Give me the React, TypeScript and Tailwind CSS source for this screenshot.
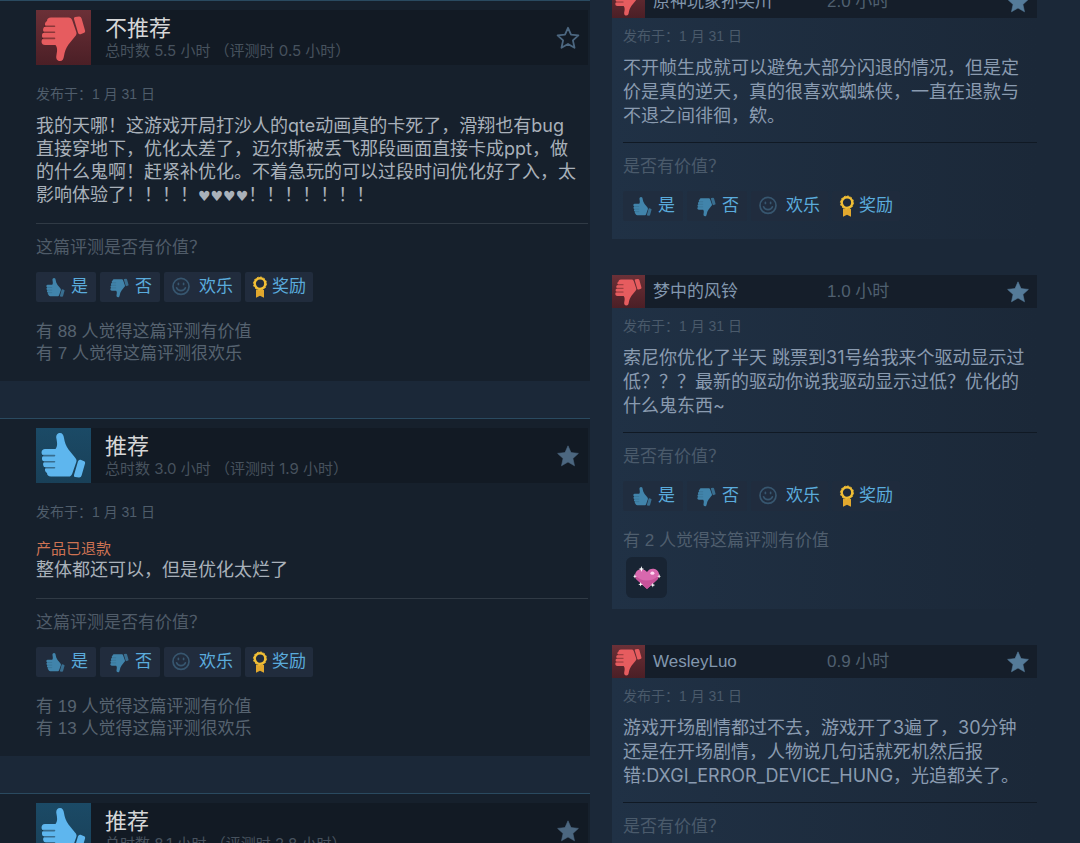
import type { ReactNode } from "react";

const hand =
  "M24 5C21 5 19.8 7.5 20.4 10.5C21 14 22 18 19.5 21H9C4.8 21 4.6 26.5 7.5 27.5C5.2 29 5.6 32.8 8 33.8C6.4 35.6 7 38.8 9.5 39.8C8.4 41.6 9 44 11 45C11 47 12.4 48.5 15 48.5H32.5C34.5 48.5 35.6 47.4 36.3 45.4L40.3 34C40.9 32.2 40.4 31 39 29.4L32.5 21.5C30 18 28.6 14 28 10C27.6 7 26.5 5 24 5Z";
const cuff =
  "M44.6 31.8L48.2 33.2Q49.4 33.8 49.1 35.2L45.6 47.6Q45 49.6 43 49.5L39.2 49.1Q37.4 48.8 38 47L42 33.2Q42.8 31.3 44.6 31.8Z";

const Thumb = ({
  down = false,
  small = false,
  className,
}: {
  down?: boolean;
  small?: boolean;
  className: string;
}) => (
  <svg viewBox="0 0 55 55" className={className} aria-hidden="true">
    <g transform={down ? "matrix(1 0 0 -1 0 56)" : undefined}>
      <path d={hand} fill="currentColor" />
      <path d={cuff} fill="currentColor" opacity={small ? 0.75 : 1} />
      <path
        d="M7 27.6H18.5M7.5 33.8H18.5M9 39.8H18.5"
        className={small ? "stroke-black/15" : "stroke-black/40"}
        strokeWidth="1.6"
        strokeLinecap="round"
        fill="none"
      />
    </g>
  </svg>
);

const Star = ({ outline = false }: { outline?: boolean }) => (
  <svg
    viewBox="0 0 24 24"
    className="size-6"
    fill={outline ? "none" : "currentColor"}
    stroke="currentColor"
    strokeWidth={outline ? 1.8 : 0.6}
    strokeLinejoin="round"
    aria-hidden="true"
  >
    <path d="M12 1.8L15 8.6L22.4 9.4L16.9 14.4L18.5 21.8L12 18L5.5 21.8L7.1 14.4L1.6 9.4L9 8.6Z" />
  </svg>
);

const Smile = () => (
  <svg
    viewBox="0 0 20 20"
    className="size-5 text-[#37566f]"
    fill="none"
    stroke="currentColor"
    strokeWidth="1.7"
    strokeLinecap="round"
    aria-hidden="true"
  >
    <circle cx="10" cy="9.4" r="8" />
    <path d="M5.6 10.8C7 14.6 13 14.6 14.4 10.8M7.4 6.4V7.4M12.6 6.4V7.4" />
  </svg>
);

const Ribbon = () => (
  <svg viewBox="0 0 16 22" className="h-[22px] w-4" aria-hidden="true">
    <path d="M4 14H12V21.8L8 19.8L4 21.8Z" fill="#e2a82e" />
    <circle cx="8" cy="7.6" r="5.3" fill="none" stroke="#f2bf35" strokeWidth="2.4" />
    <circle
      cx="8"
      cy="7.6"
      r="6.6"
      fill="none"
      stroke="#f2bf35"
      strokeWidth="1"
      strokeDasharray="1.8 1.66"
    />
  </svg>
);

const HeartAward = () => (
  <svg viewBox="0 0 28 24" className="h-6 w-7" aria-hidden="true">
    <path
      d="M14 23L3.6 13.6C0.4 10 2.4 3.8 7.6 3.2C10.4 2.9 12.6 4 14 6C15.4 3.6 18 2.4 20.8 2.8C26 3.6 27.8 9.6 24.4 13.4Z"
      fill="#d868ae"
    />
    <path
      d="M14 23L3.6 13.6C2.4 12.2 2 10.8 2.2 9C8 16.4 18 16.4 25.8 9.4C25.8 10.8 25.4 12.2 24.4 13.4Z"
      fill="#c65299"
    />
    <ellipse cx="19.4" cy="7.2" rx="2" ry="1.6" fill="#ffd9f2" />
    <path
      d="M8.4 0L9.1 2.3L11.2 3L9.1 3.7L8.4 6L7.7 3.7L5.6 3L7.7 2.3ZM1.8 8L2.3 9.7L4 10.2L2.3 10.7L1.8 12.4L1.3 10.7L0 10.2L1.3 9.7ZM26.2 8L26.7 9.7L28 10.2L26.7 10.7L26.2 12.4L25.7 10.7L24 10.2L25.7 9.7ZM7.6 16L8.2 17.7L10 18.3L8.2 18.9L7.6 20.6L7 18.9L5.2 18.3L7 17.7ZM19.8 16.8L20.4 18.5L22.2 19.1L20.4 19.7L19.8 21.4L19.2 19.7L17.4 19.1L19.2 18.5Z"
      fill="#fff"
    />
  </svg>
);

const voteButton =
  "flex h-[30px] cursor-pointer items-center rounded-xs text-[17px] leading-[22px] text-[#5aabdc]";

const VoteButtons = ({ compact = false }: { compact?: boolean }) => {
  const tone = compact ? "bg-[#212c3d]/70" : "bg-[#212c3d]";
  return (
    <div className="mt-[13px] flex gap-1">
      <button type="button" className={`${voteButton} ${tone} gap-1 px-2`}>
        <Thumb small className="size-[23px] text-[#4184ab]" />是
      </button>
      <button type="button" className={`${voteButton} ${tone} gap-1 px-2`}>
        <Thumb small down className="size-[23px] text-[#4184ab]" />否
      </button>
      <button type="button" className={`${voteButton} ${tone} gap-2 pr-2 pl-[7px]`}>
        <Smile />欢乐
      </button>
      <button type="button" className={`${voteButton} ${tone} gap-1 px-[7px]`}>
        <Ribbon />奖励
      </button>
    </div>
  );
};

type MainReviewProps = {
  recommended?: boolean;
  hours: string;
  refunded?: boolean;
  helpful: number;
  funny: number;
  children: ReactNode;
};

const MainReview = ({
  recommended = false,
  hours,
  refunded = false,
  helpful,
  funny,
  children,
}: MainReviewProps) => {
  return (
    <article className="border-t border-[#2a4a60] bg-[#16202c] pt-[9px] pr-0.5 pb-4 pl-9">
      <header className="flex h-[55px] items-center bg-[#121a24]">
        {recommended ? (
          <div className="size-[55px] shrink-0 bg-linear-to-b from-[#1b4a66] to-[#194058] text-[#5eb6ee]">
            <Thumb className="size-full" />
          </div>
        ) : (
          <div className="size-[55px] shrink-0 bg-linear-to-b from-[#6b3037] to-[#4b1f26] text-[#e65c5f]">
            <Thumb down className="size-full" />
          </div>
        )}
        <div className="min-w-0 flex-1 pt-0.5 pl-3.5">
          <h2 className="text-[22px] leading-6 text-[#d6d7d8]">
            {recommended ? "推荐" : "不推荐"}
          </h2>
          <p className="font-['Inter','Noto_Sans_CJK_SC',sans-serif] text-[15px] leading-5 text-[#47525e]">
            {hours}
          </p>
        </div>
        <button type="button" aria-label="收藏" className="mr-2 cursor-pointer text-[#4c6780]">
          <Star outline={!recommended} />
        </button>
      </header>
      <p className="mt-[19px] text-sm leading-5 text-[#4f5d6b]">发布于：1 月 31 日</p>
      {refunded && (
        <p className="mt-[17px] -mb-[11px] text-[15px] leading-5 text-[#ce7353]">产品已退款</p>
      )}
      <div className="mt-2.5 pr-2 font-['Inter','Noto_Sans_CJK_SC',sans-serif] text-lg leading-[23px] text-[#a9b1ba]">
        {children}
      </div>
      <hr className="mt-[17px] border-[#303a45]" />
      <p className="mt-[13px] text-[17px] leading-[22px] text-[#4f5b68]">
        这篇评测是否有价值？
      </p>
      <VoteButtons />
      <div className="mt-[19px] text-[17px] leading-[22px] text-[#566370]">
        <p>有 {helpful} 人觉得这篇评测有价值</p>
        <p>有 {funny} 人觉得这篇评测很欢乐</p>
      </div>
    </article>
  );
};

type RecentReviewProps = {
  name: string;
  hours: string;
  helpful?: number;
  children: ReactNode;
};

const RecentReview = ({ name, hours, helpful, children }: RecentReviewProps) => {
  return (
    <article className="bg-linear-to-r from-[#203145] to-[#1b2838]">
      <header className="flex h-[33px] items-center bg-[#151e2a]">
        <div className="size-[33px] shrink-0 bg-linear-to-b from-[#6b3037] to-[#4b1f26] text-[#e65c5f]">
          <Thumb down className="size-full" />
        </div>
        <a href="#" className="w-[182px] truncate pl-2 text-[17px] leading-6 text-[#8297ae]">
          {name}
        </a>
        <span className="flex-1 text-[17px] leading-6 text-[#506070]">{hours}</span>
        <button type="button" aria-label="收藏" className="mr-[7px] cursor-pointer text-[#557b99]">
          <Star />
        </button>
      </header>
      <div className={`pl-[11px] ${helpful ? "pb-[11px]" : "pb-[18px]"}`}>
        <p className="mt-2 text-sm leading-5 text-[#4a5a6b]">发布于：1 月 31 日</p>
        <div className="mt-2.5 pr-2 font-['Inter','Noto_Sans_CJK_SC',sans-serif] text-lg leading-6 text-[#8a9bb0]">
          {children}
        </div>
        <hr className="mt-3.5 border-[#101924]" />
        <p className="mt-[13px] text-[17px] leading-[22px] text-[#4a5a6b]">是否有价值？</p>
        <VoteButtons compact />
        {helpful && (
          <>
            <p className="mt-[19px] text-[17px] leading-[22px] text-[#4f5e6e]">
              有 {helpful} 人觉得这篇评测有价值
            </p>
            <div className="mt-[5px] ml-[3px] flex size-[41px] items-center justify-center rounded-md bg-[#182433]">
              <HeartAward />
            </div>
          </>
        )}
      </div>
    </article>
  );
};

const App = () => {
  return (
    <main className="grid h-screen grid-cols-[590fr_490fr] items-start overflow-hidden bg-[#1b2838] font-['Liberation_Sans','Noto_Sans_CJK_SC',sans-serif]">
      <section className="flex min-w-0 flex-col gap-[37px]">
        <MainReview hours="总时数 5.5 小时 （评测时 0.5 小时）" helpful={88} funny={7}>
          我的天哪！这游戏开局打沙人的qte动画真的卡死了，滑翔也有bug直接穿地下，优化太差了，迈尔斯被丢飞那段画面直接卡成ppt，做的什么鬼啊！赶紧补优化。不着急玩的可以过段时间优化好了入，太影响体验了！！！！
          <span className="font-['DejaVu_Sans',sans-serif] text-sm leading-none">♥♥♥♥</span>
          ！！！！！！！
        </MainReview>
        <MainReview
          recommended
          refunded
          hours="总时数 3.0 小时 （评测时 1.9 小时）"
          helpful={19}
          funny={13}
        >
          整体都还可以，但是优化太烂了
        </MainReview>
        <MainReview
          recommended
          hours="总时数 8.1 小时 （评测时 2.8 小时）"
          helpful={12}
          funny={1}
        >
          整体不错
        </MainReview>
      </section>

      <section className="-mt-[15px] flex min-w-0 flex-col gap-9 pr-[43px] pl-[22px]">
        <RecentReview name="原神玩家孙笑川" hours="2.0 小时">
          不开帧生成就可以避免大部分闪退的情况，但是定价是真的逆天，真的很喜欢蜘蛛侠，一直在退款与不退之间徘徊，欸。
        </RecentReview>
        <RecentReview name="梦中的风铃" hours="1.0 小时" helpful={2}>
          索尼你优化了半天 跳票到31号给我来个驱动显示过低？？？最新的驱动你说我驱动显示过低？优化的什么鬼东西~
        </RecentReview>
        <RecentReview name="WesleyLuo" hours="0.9 小时">
          游戏开场剧情都过不去，游戏开了3遍了，30分钟还是在开场剧情，人物说几句话就死机然后报错:DXGI_ERROR_DEVICE_HUNG，光追都关了。
        </RecentReview>
      </section>
    </main>
  );
};

export default App;
